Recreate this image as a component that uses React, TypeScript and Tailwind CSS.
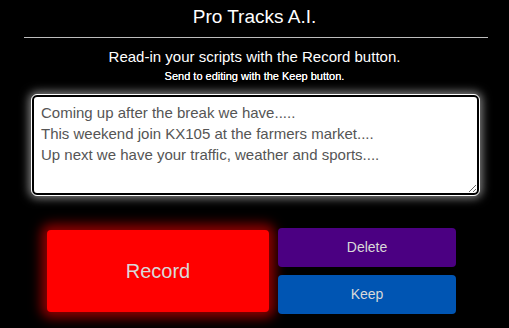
export default function App() {
  return (
    <div className="min-h-screen w-full bg-black text-white font-['Liberation_Sans',Arial,sans-serif]">
      <div className="pt-[6px] text-center text-[19px] leading-[22px]">Pro Tracks A.I.</div>
      <div className="mt-[9px] ml-[24px] mr-[21px] h-[1px] bg-[#bdbdbd]" />
      <div className="mt-[10px] text-center text-[15px] leading-[18px]">
        Read-in your scripts with the Record button.
      </div>
      <div className="mt-[3px] text-center text-[11px] leading-[14px] font-normal [text-shadow:0_0_0.4px_white]">
        Send to editing with the Keep button.
      </div>
      <div className="mt-[12px] ml-[32px] w-[447px]">
        <textarea
          readOnly
          defaultValue={
            "Coming up after the break we have.....\nThis weekend join KX105 at the farmers market....\nUp next we have your traffic, weather and sports...."
          }
          className="block h-[100px] w-full resize-y rounded-[5px] border-2 border-black bg-white px-[7px] py-[5px] text-[15px] leading-[21px] text-[#555] outline outline-1 outline-white shadow-[0_0_10px_3px_rgba(255,255,255,0.55)] font-['Liberation_Sans',Arial,sans-serif]"
        />
      </div>
      <div className="mt-[33px] ml-[47px] flex gap-[9px]">
        <button className="h-[82px] w-[222px] mt-[2px] rounded-[4px] bg-[#ff0000] text-[20px] text-[#d9d9d9] shadow-[0_0_12px_6px_rgba(255,0,0,0.55)]">
          Record
        </button>
        <div className="flex flex-col gap-[8px]">
          <button className="h-[39px] w-[178px] rounded-[4px] bg-[#4b0082] text-[14px] text-[#d9d9d9]">
            Delete
          </button>
          <button className="h-[39px] w-[178px] rounded-[4px] bg-[#0055b3] text-[14px] text-[#d9d9d9]">
            Keep
          </button>
        </div>
      </div>
    </div>
  );
}
